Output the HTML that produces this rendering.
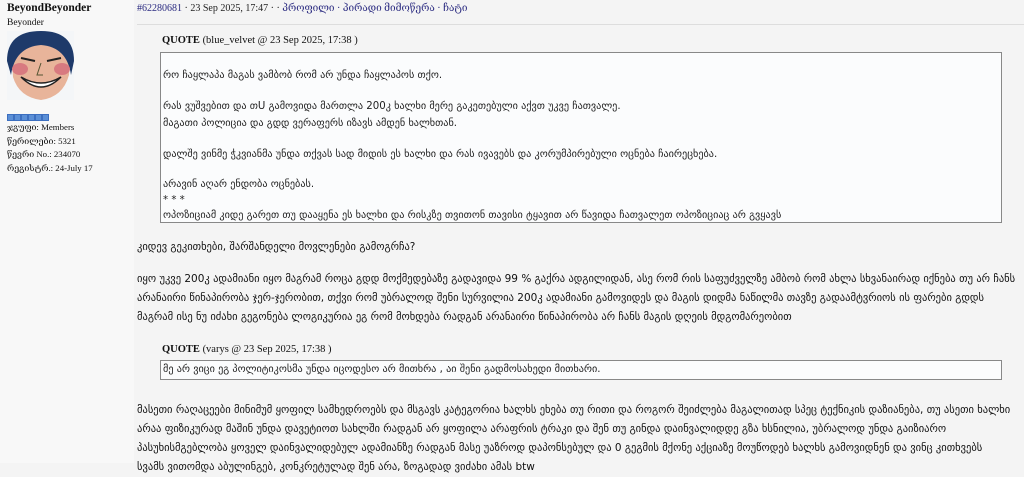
<!DOCTYPE html>
<html><head><meta charset="utf-8"><style>
body{margin:0;width:1024px;height:463px;overflow:hidden;background:#f4f4f4;font-family:"Liberation Serif","DejaVu Serif",serif;color:#111}
.left{position:absolute;left:0;top:0;width:134px;height:463px;background:#f8f8f8}
.name{position:absolute;left:7px;top:2px;font-weight:bold;font-size:11.5px}
.title{position:absolute;left:7px;top:18px;font-size:9.5px}
.av{position:absolute;left:7px;top:31px;width:67px;height:69px}
.pips{position:absolute;left:7px;top:114px;font-size:0}
.pips i{display:inline-block;width:5px;height:5px;background:#5b8fd6;border:1px solid #3c6fc0}
.info{position:absolute;left:7px;top:121px;font-size:8.8px;line-height:13.5px}
.hdr{position:absolute;left:137px;top:3px;font-size:10px;color:#2a2a80}
.hdr span{color:#222}
.sep{position:absolute;left:137px;top:24px;width:887px;height:1px;background:#ddd}
.q{position:absolute;left:162px;font-size:10.5px}
.qb{position:absolute;background:#fbfcfd;border:1px solid #888;font-family:"DejaVu Sans",sans-serif;font-size:10.2px;color:#222;padding-left:2px;white-space:nowrap;overflow:hidden}
.body{position:absolute;left:137px;line-height:19px;font-family:"DejaVu Sans",sans-serif;font-size:10.5px;color:#111;white-space:nowrap}
</style></head><body>
<div class="left">
<div class="name">BeyondBeyonder</div>
<div class="title">Beyonder</div>
<svg class="av" viewBox="0 0 67 69">
<rect width="67" height="69" fill="#f4f6f8"/>
<path d="M4 18 Q8 2 34 1 Q60 2 64 18 L62 44 Q56 66 34 69 Q12 66 6 46Z" fill="#e8b49a"/>
<path d="M0 30 Q0 0 34 0 Q67 0 67 30 L64 44 Q60 16 34 14 Q8 16 4 44Z" fill="#1e3a6a"/>
<ellipse cx="13" cy="38" rx="8" ry="6" fill="#d87a80"/><ellipse cx="55" cy="38" rx="8" ry="6" fill="#d87a80"/>
<path d="M14 27 L28 30 M40 30 L54 27" stroke="#222" stroke-width="2"/>
<path d="M34 32 L30 44 L36 44" stroke="#553" fill="none"/>
<path d="M14 46 Q34 58 54 46 Q34 66 14 46Z" fill="#fff" stroke="#222" stroke-width="1.5"/>
</svg>
<div class="pips"><i></i><i></i><i></i><i></i><i></i><i></i></div>
<div class="info">ჯგუფი: Members<br>წერილები: 5321<br>წევრი No.: 234070<br>რეგისტრ.: 24-July 17</div>
</div>
<div class="hdr">#62280681 <span>· 23 Sep 2025, 17:47 · ·</span> პროფილი · პირადი მიმოწერა · ჩატი</div>
<div class="sep"></div>
<div class="q" style="top:35px"><b>QUOTE</b> (blue_velvet @ 23 Sep 2025, 17:38 )</div>
<div class="qb" style="left:160px;top:52px;width:838px;height:169px;line-height:15.5px">
<div style="padding-top:15px">რო ჩაყლაპა მაგას ვამბობ რომ არ უნდა ჩაყლაპოს თქო.</div>
<div style="margin-top:15px">რას ვუშვებით და თU გამოვიდა მართლა 200კ ხალხი მერე გაკეთებული აქვთ უკვე ჩათვალე.</div>
<div style="margin-top:2px">მაგათი პოლიცია და გდდ ვერაფერს იზავს ამდენ ხალხთან.</div>
<div style="margin-top:15px">დალშე ვინმე ჭკვიანმა უნდა თქვას სად მიდის ეს ხალხი და რას ივავებს და კორუმპირებული ოცნება ჩაირეცხება.</div>
<div style="margin-top:15px">არავინ აღარ ენდობა ოცნებას.</div>
<div>* * *</div>
<div>ოპოზიციამ კიდე გარეთ თუ დააყენა ეს ხალხი და რისკზე თვითონ თავისი ტყავით არ წავიდა ჩათვალეთ ოპოზიციაც არ გვყავს</div>
</div>
<div class="body" style="top:238px">კიდევ გეკითხები, შარშანდელი მოვლენები გამოგრჩა?</div>
<div class="body" style="top:270px">იყო უკვე 200კ ადამიანი იყო მაგრამ როცა გდდ მოქმედებაზე გადავიდა 99 % გაქრა ადგილიდან, ასე რომ რის საფუძველზე ამბობ რომ ახლა სხვანაირად იქნება თუ არ ჩანს<br>არანაირი წინაპირობა ჯერ-ჯერობით, თქვი რომ უბრალოდ შენი სურვილია 200კ ადამიანი გამოვიდეს და მაგის დიდმა ნაწილმა თავზე გადაამტვრიოს ის ფარები გდდს<br>მაგრამ ისე ნუ იძახი გეგონება ლოგიკურია ეგ რომ მოხდება რადგან არანაირი წინაპირობა არ ჩანს მაგის დღეის მდგომარეობით</div>
<div class="q" style="top:344px"><b>QUOTE</b> (varys @ 23 Sep 2025, 17:38 )</div>
<div class="qb" style="left:160px;top:360px;width:838px;height:18px;line-height:18px">მე არ ვიცი ეგ პოლიტიკოსმა უნდა იცოდესო არ მითხრა , აი შენი გადმოსახედი მითხარი.</div>
<div class="body" style="top:401px">მასეთი რაღაცეები მინიმუმ ყოფილ სამხედროებს და მსგავს კატეგორია ხალხს ეხება თუ რითი და როგორ შეიძლება მაგალითად სპეც ტექნიკის დაზიანება, თუ ასეთი ხალხი<br>არაა ფიზიკურად მაშინ უნდა დავეტიოთ სახლში რადგან არ ყოფილა არაფრის ტრაკი და შენ თუ გინდა დაინვალიდდე გზა ხსნილია, უბრალოდ უნდა გაიზიარო<br>პასუხისმგებლობა ყოველ დაინვალიდებულ ადამიანზე რადგან მასე უაზროდ დაპონსებულ და 0 გეგმის მქონე აქციაზე მოუწოდებ ხალხს გამოვიდნენ და ვინც კითხვებს<br>სვამს ვითომდა აბულინგებ, კონკრეტულად შენ არა, ზოგადად ვიძახი ამას btw</div>
</body></html>
